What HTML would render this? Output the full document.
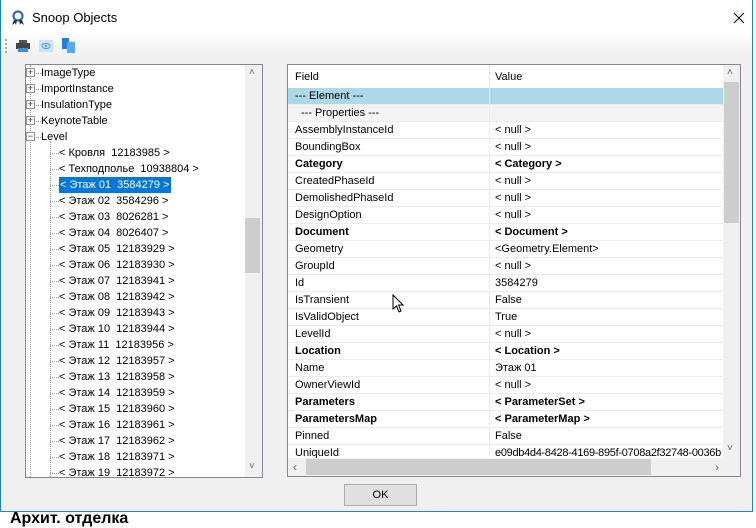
<!DOCTYPE html>
<html><head><meta charset="utf-8"><style>
*{margin:0;padding:0;box-sizing:border-box}
body{width:756px;height:515px;background:#fff;position:relative;overflow:hidden;font-family:"Liberation Sans",sans-serif;font-size:11px;color:#000}
.win{position:absolute;left:0;top:0;width:753px;height:512px;background:#f0f0f0;border:1px solid #1883d7;border-top:none;z-index:5}
.title{position:absolute;left:0;top:0;width:751px;height:34px;background:#fff}
.tb{position:absolute;left:0;top:34px;width:751px;height:22px;background:linear-gradient(#fdfdfd,#f0f0f0)}
.a{position:absolute;white-space:nowrap}
.panel{position:absolute;background:#fff;border:1px solid #828790}
.row{position:absolute;left:0;height:17px;border-bottom:1px solid #ececec;width:435px;white-space:nowrap}
.f{position:absolute;left:7px;top:2px;white-space:nowrap}
.v{position:absolute;left:207px;top:2px;white-space:nowrap}
.b{font-weight:bold}
.t{position:absolute;white-space:nowrap;height:16px;line-height:16px}
.dl{position:absolute;border-left:1px dotted #999}
.dh{position:absolute;border-top:1px dotted #999;width:9px}
.pm{position:absolute;width:9px;height:9px;border:1px solid #919191;background:#fff;font-size:9px;line-height:7px;text-align:center;color:#333}
</style></head><body>
<div class="a" style="left:10px;top:510px;font-size:16px;font-weight:bold;z-index:1">Архит. отделка</div>
<div class="win">
<div class="title"></div>
<svg class="a" style="left:10px;top:10px" width="14" height="16" viewBox="0 0 14 16"><circle cx="7" cy="6" r="4.5" fill="none" stroke="#3a6ea5" stroke-width="2.2"/><path d="M3 10 L1 15 L4 13 L5 15 L6 10 M11 10 L13 15 L10 13 L9 15 L8 10" fill="#333"/></svg>
<div class="a" style="left:31px;top:10px;font-size:13px">Snoop Objects</div>
<svg class="a" style="left:732px;top:12px" width="12" height="12"><path d="M1 1 L11 11 M11 1 L1 11" stroke="#111" stroke-width="1.1"/></svg>
<div class="tb"></div>
<div class="a" style="left:4px;top:39px;width:2px;height:14px;border-left:2px dotted #aaa"></div>
<svg class="a" style="left:14px;top:40px" width="16" height="13"><rect x="4" y="0" width="8" height="3" fill="#555"/><rect x="1" y="3" width="14" height="6" fill="#444"/><rect x="3" y="8" width="10" height="4" fill="#3b8fdc"/></svg>
<svg class="a" style="left:38px;top:40px" width="14" height="12"><rect width="14" height="12" fill="#cce4f7"/><ellipse cx="7" cy="6" rx="4" ry="2.5" fill="none" stroke="#4a9bd6"/><circle cx="7" cy="6" r="1.2" fill="#4a9bd6"/></svg>
<svg class="a" style="left:61px;top:38px" width="14" height="15"><rect x="0" y="0" width="7" height="11" fill="#1e7fd6"/><rect x="5" y="4" width="8" height="11" fill="#5aa8e8"/></svg>

<div class="panel" style="left:24px;top:64px;width:238px;height:414px;overflow:hidden">
<div class="dl" style="left:4px;top:0;height:412px"></div>
<div class="dl" style="left:24px;top:76px;height:336px"></div>
<div class="pm" style="left:0;top:3px">+</div><div class="dh" style="left:10px;top:8px;width:5px"></div><div class="t" style="left:15px;top:0">ImageType</div>
<div class="pm" style="left:0;top:19px">+</div><div class="dh" style="left:10px;top:24px;width:5px"></div><div class="t" style="left:15px;top:16px">ImportInstance</div>
<div class="pm" style="left:0;top:35px">+</div><div class="dh" style="left:10px;top:40px;width:5px"></div><div class="t" style="left:15px;top:32px">InsulationType</div>
<div class="pm" style="left:0;top:51px">+</div><div class="dh" style="left:10px;top:56px;width:5px"></div><div class="t" style="left:15px;top:48px">KeynoteTable</div>
<div class="pm" style="left:0;top:67px">−</div><div class="dh" style="left:10px;top:72px;width:5px"></div><div class="t" style="left:15px;top:64px">Level</div>
<div class="dh" style="left:24px;top:88px"></div><div class="t" style="left:33px;top:80px">&lt; Кровля&nbsp; 12183985 &gt;</div>
<div class="dh" style="left:24px;top:104px"></div><div class="t" style="left:33px;top:96px">&lt; Техподполье&nbsp; 10938804 &gt;</div>
<div class="dh" style="left:24px;top:120px"></div><div class="t" style="left:33px;top:112px;background:#0078d7;color:#fff;padding:0 2px 0 1px">&lt; Этаж 01&nbsp; 3584279 &gt;</div>
<div class="dh" style="left:24px;top:136px"></div><div class="t" style="left:33px;top:128px">&lt; Этаж 02&nbsp; 3584296 &gt;</div>
<div class="dh" style="left:24px;top:152px"></div><div class="t" style="left:33px;top:144px">&lt; Этаж 03&nbsp; 8026281 &gt;</div>
<div class="dh" style="left:24px;top:168px"></div><div class="t" style="left:33px;top:160px">&lt; Этаж 04&nbsp; 8026407 &gt;</div>
<div class="dh" style="left:24px;top:184px"></div><div class="t" style="left:33px;top:176px">&lt; Этаж 05&nbsp; 12183929 &gt;</div>
<div class="dh" style="left:24px;top:200px"></div><div class="t" style="left:33px;top:192px">&lt; Этаж 06&nbsp; 12183930 &gt;</div>
<div class="dh" style="left:24px;top:216px"></div><div class="t" style="left:33px;top:208px">&lt; Этаж 07&nbsp; 12183941 &gt;</div>
<div class="dh" style="left:24px;top:232px"></div><div class="t" style="left:33px;top:224px">&lt; Этаж 08&nbsp; 12183942 &gt;</div>
<div class="dh" style="left:24px;top:248px"></div><div class="t" style="left:33px;top:240px">&lt; Этаж 09&nbsp; 12183943 &gt;</div>
<div class="dh" style="left:24px;top:264px"></div><div class="t" style="left:33px;top:256px">&lt; Этаж 10&nbsp; 12183944 &gt;</div>
<div class="dh" style="left:24px;top:280px"></div><div class="t" style="left:33px;top:272px">&lt; Этаж 11&nbsp; 12183956 &gt;</div>
<div class="dh" style="left:24px;top:296px"></div><div class="t" style="left:33px;top:288px">&lt; Этаж 12&nbsp; 12183957 &gt;</div>
<div class="dh" style="left:24px;top:312px"></div><div class="t" style="left:33px;top:304px">&lt; Этаж 13&nbsp; 12183958 &gt;</div>
<div class="dh" style="left:24px;top:328px"></div><div class="t" style="left:33px;top:320px">&lt; Этаж 14&nbsp; 12183959 &gt;</div>
<div class="dh" style="left:24px;top:344px"></div><div class="t" style="left:33px;top:336px">&lt; Этаж 15&nbsp; 12183960 &gt;</div>
<div class="dh" style="left:24px;top:360px"></div><div class="t" style="left:33px;top:352px">&lt; Этаж 16&nbsp; 12183961 &gt;</div>
<div class="dh" style="left:24px;top:376px"></div><div class="t" style="left:33px;top:368px">&lt; Этаж 17&nbsp; 12183962 &gt;</div>
<div class="dh" style="left:24px;top:392px"></div><div class="t" style="left:33px;top:384px">&lt; Этаж 18&nbsp; 12183971 &gt;</div>
<div class="dh" style="left:24px;top:408px"></div><div class="t" style="left:33px;top:400px">&lt; Этаж 19&nbsp; 12183972 &gt;</div>
<div class="a" style="left:219px;top:0;width:17px;height:412px;background:#f0f0f0"></div>
<div class="a" style="left:219px;top:153px;width:15px;height:55px;background:#cdcdcd"></div>
<div class="a" style="left:223px;top:2px;font-size:10px;color:#606060">˄</div>
<div class="a" style="left:223px;top:396px;font-size:10px;color:#606060">˅</div>
</div>

<div class="panel" style="left:286px;top:64px;width:454px;height:413px;overflow:hidden">
<div class="a" style="left:0;top:0;width:435px;height:23px;background:#fff"></div>
<div class="a" style="left:7px;top:6px">Field</div>
<div class="a" style="left:201px;top:0;height:23px;border-left:1px solid #e5e5e5"></div>
<div class="a" style="left:207px;top:6px">Value</div>
<div class="a" style="left:201px;top:23px;height:370px;border-left:1px solid #ececec;z-index:2"></div>
<div class="row" style="top:23px;background:#add8e6"><span class="f">--- Element ---</span></div>
<div class="row" style="top:40px;background:#f4f4f4"><span class="f" style="left:13px">--- Properties ---</span></div>
<div class="row" style="top:57px"><span class="f">AssemblyInstanceId</span><span class="v">&lt; null &gt;</span></div>
<div class="row" style="top:74px"><span class="f">BoundingBox</span><span class="v">&lt; null &gt;</span></div>
<div class="row b" style="top:91px"><span class="f">Category</span><span class="v">&lt; Category &gt;</span></div>
<div class="row" style="top:108px"><span class="f">CreatedPhaseId</span><span class="v">&lt; null &gt;</span></div>
<div class="row" style="top:125px"><span class="f">DemolishedPhaseId</span><span class="v">&lt; null &gt;</span></div>
<div class="row" style="top:142px"><span class="f">DesignOption</span><span class="v">&lt; null &gt;</span></div>
<div class="row b" style="top:159px"><span class="f">Document</span><span class="v">&lt; Document &gt;</span></div>
<div class="row" style="top:176px"><span class="f">Geometry</span><span class="v">&lt;Geometry.Element&gt;</span></div>
<div class="row" style="top:193px"><span class="f">GroupId</span><span class="v">&lt; null &gt;</span></div>
<div class="row" style="top:210px"><span class="f">Id</span><span class="v">3584279</span></div>
<div class="row" style="top:227px"><span class="f">IsTransient</span><span class="v">False</span></div>
<div class="row" style="top:244px"><span class="f">IsValidObject</span><span class="v">True</span></div>
<div class="row" style="top:261px"><span class="f">LevelId</span><span class="v">&lt; null &gt;</span></div>
<div class="row b" style="top:278px"><span class="f">Location</span><span class="v">&lt; Location &gt;</span></div>
<div class="row" style="top:295px"><span class="f">Name</span><span class="v">Этаж 01</span></div>
<div class="row" style="top:312px"><span class="f">OwnerViewId</span><span class="v">&lt; null &gt;</span></div>
<div class="row b" style="top:329px"><span class="f">Parameters</span><span class="v">&lt; ParameterSet &gt;</span></div>
<div class="row b" style="top:346px"><span class="f">ParametersMap</span><span class="v">&lt; ParameterMap &gt;</span></div>
<div class="row" style="top:363px"><span class="f">Pinned</span><span class="v">False</span></div>
<div class="row" style="top:380px;overflow:hidden"><span class="f">UniqueId</span><span class="v" style="letter-spacing:-0.3px">e09db4d4-8428-4169-895f-0708a2f32748-0036b</span></div>
<svg class="a" style="left:104px;top:229px;z-index:3" width="13" height="20"><path d="M1 1 L1 15 L4.5 12 L7 18 L9 17 L6.5 11 L11 11 Z" fill="#fff" stroke="#000"/></svg>
<div class="a" style="left:435px;top:0;width:17px;height:394px;background:#f0f0f0"></div>
<div class="a" style="left:436px;top:17px;width:15px;height:141px;background:#cdcdcd"></div>
<div class="a" style="left:439px;top:2px;font-size:10px;color:#606060">˄</div>
<div class="a" style="left:439px;top:378px;font-size:10px;color:#606060">˅</div>
<div class="a" style="left:0;top:393px;width:452px;height:18px;background:#f0f0f0"></div>
<div class="a" style="left:18px;top:394px;width:345px;height:16px;background:#cdcdcd"></div>
<div class="a" style="left:5px;top:395px;font-size:12px;color:#606060">‹</div>
<div class="a" style="left:427px;top:395px;font-size:12px;color:#606060">›</div>
</div>

<div class="a" style="left:343px;top:484px;width:73px;height:22px;background:#e1e1e1;border:1px solid #adadad;text-align:center;line-height:20px">OK</div>
</div>
</body></html>
